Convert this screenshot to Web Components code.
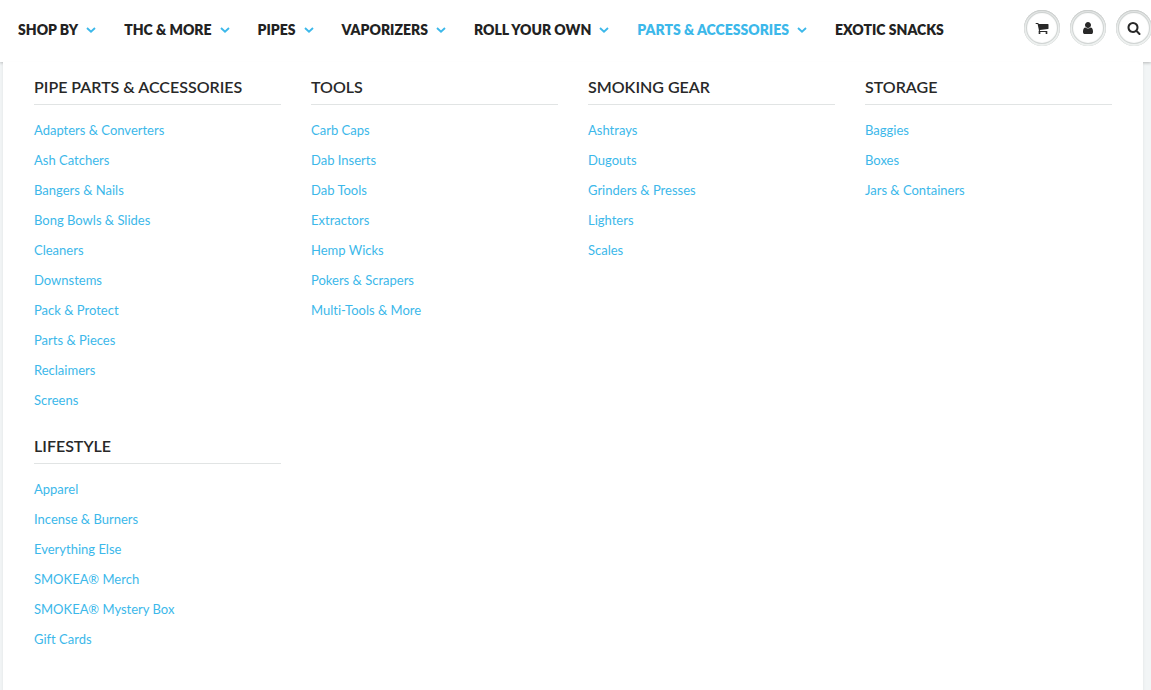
<!DOCTYPE html>
<html lang="en">
<head>
<meta charset="utf-8">
<title>Parts &amp; Accessories</title>
<style>
html { height: 100%; }
body { margin: 0; min-height: 100%; display: flex; flex-direction: column; background: #f2f5f6; font-family: Lato, "Liberation Sans", sans-serif; color: #282828; overflow-x: hidden; }
mega-menu { flex: 1; }
</style>
</head>
<body>
<site-header>
  <nav-item menu>SHOP BY</nav-item>
  <nav-item menu>THC &amp; MORE</nav-item>
  <nav-item menu>PIPES</nav-item>
  <nav-item menu>VAPORIZERS</nav-item>
  <nav-item menu>ROLL YOUR OWN</nav-item>
  <nav-item menu active>PARTS &amp; ACCESSORIES</nav-item>
  <nav-item>EXOTIC SNACKS</nav-item>
  <icon-button slot="actions" icon="cart" label="Cart"></icon-button>
  <icon-button slot="actions" icon="user" label="Account"></icon-button>
  <icon-button slot="actions" icon="search" label="Search"></icon-button>
</site-header>
<mega-menu>
  <menu-group heading="PIPE PARTS &amp; ACCESSORIES" items="Adapters &amp; Converters|Ash Catchers|Bangers &amp; Nails|Bong Bowls &amp; Slides|Cleaners|Downstems|Pack &amp; Protect|Parts &amp; Pieces|Reclaimers|Screens"></menu-group>
  <menu-group heading="TOOLS" items="Carb Caps|Dab Inserts|Dab Tools|Extractors|Hemp Wicks|Pokers &amp; Scrapers|Multi-Tools &amp; More"></menu-group>
  <menu-group heading="SMOKING GEAR" items="Ashtrays|Dugouts|Grinders &amp; Presses|Lighters|Scales"></menu-group>
  <menu-group heading="STORAGE" items="Baggies|Boxes|Jars &amp; Containers"></menu-group>
  <menu-group heading="LIFESTYLE" items="Apparel|Incense &amp; Burners|Everything Else|SMOKEA® Merch|SMOKEA® Mystery Box|Gift Cards"></menu-group>
</mega-menu>
<script>
class BaseElement extends HTMLElement {
  render(html) {
    const t = document.createElement('template');
    t.innerHTML = html;
    this.attachShadow({ mode: 'open' }).append(t.content.cloneNode(true));
  }
}

customElements.define('site-header', class extends BaseElement {
  constructor() {
    super();
    this.render(`<style>
      :host { display: block; background: #fff; box-shadow: 0 1px 3px rgba(0,0,0,.25); }
      header { display: flex; justify-content: space-between; height: 62px; }
      nav { display: flex; gap: 28px; padding: 20px 0 0 18px; }
      .actions { display: flex; gap: 10px; padding-top: 10px; margin-right: -1px; }
    </style>
    <header><nav aria-label="Main"><slot></slot></nav><div class="actions"><slot name="actions"></slot></div></header>`);
  }
});

customElements.define('nav-item', class extends BaseElement {
  connectedCallback() {
    if (this.shadowRoot) return;
    const arrow = this.hasAttribute('menu')
      ? '<svg width="10" height="6" viewBox="0 0 10 6" aria-hidden="true"><path d="M1 1l4 3.7L9 1" fill="none" stroke="#3cb8ea" stroke-width="1.9"/></svg>' : '';
    this.render(`<style>
      :host { display: block; white-space: nowrap; }
      a { display: flex; align-items: center; gap: 8px; color: #222; text-decoration: none; font-size: 14px; line-height: 20px; font-weight: 800; }
      :host([active]) a { color: #3cb8ea; }
      svg { display: block; }
    </style><a href="#"><slot></slot>${arrow}</a>`);
  }
});

const ICONS = {
  cart: 'M704 1536q0 52-38 90t-90 38-90-38-38-90 38-90 90-38 90 38 38 90zm896 0q0 52-38 90t-90 38-90-38-38-90 38-90 90-38 90 38 38 90zm128-1088v512q0 24-16.5 42.5t-40.5 21.5l-1044 122q13 60 13 70 0 16-24 64h920q26 0 45 19t19 45-19 45-45 19h-1024q-26 0-45-19t-19-45q0-11 8-31.5t16-36 21.5-40 15.5-29.5l-177-823h-204q-26 0-45-19t-19-45 19-45 45-19h256q16 0 28.5 6.5t19.5 15.5 13 24.5 8 26 5.5 29.5 4.5 26h1201q26 0 45 19t19 45z',
  user: 'M1536 1399q0 109-62.5 187t-150.5 78h-854q-88 0-150.5-78t-62.5-187q0-85 8.5-160.5t31.5-152 58.5-131 94-89 134.5-34.5q131 128 313 128t313-128q76 0 134.5 34.5t94 89 58.5 131 31.5 152 8.5 160.5zm-256-887q0 159-112.5 271.5t-271.5 112.5-271.5-112.5-112.5-271.5 112.5-271.5 271.5-112.5 271.5 112.5 112.5 271.5z',
  search: 'M1216 832q0-185-131.5-316.5t-316.5-131.5-316.5 131.5-131.5 316.5 131.5 316.5 316.5 131.5 316.5-131.5 131.5-316.5zm512 832q0 52-38 90t-90 38q-54 0-90-38l-343-342q-179 124-399 124-143 0-273.5-55.5t-225-150-150-225-55.5-273.5 55.5-273.5 150-225 225-150 273.5-55.5 273.5 55.5 225 150 150 225 55.5 273.5q0 220-124 399l343 343q37 37 37 90z'
};

customElements.define('icon-button', class extends BaseElement {
  connectedCallback() {
    if (this.shadowRoot) return;
    this.render(`<style>
      :host { display: block; }
      button { display: flex; align-items: center; justify-content: center; box-sizing: border-box; width: 36px; height: 36px; padding: 0; border: 0; border-radius: 50%; background: #fff; color: #282828; box-shadow: inset 0 1px 2px rgba(0,0,0,.2), inset 0 0 0 2px #eef1f0, inset 0 0 1px 3px #ccd0cf; cursor: pointer; }
      svg { display: block; }
    </style><button type="button" aria-label="${this.getAttribute('label')}"><svg width="14" height="14" viewBox="0 0 1792 1792" fill="currentColor" aria-hidden="true"><path d="${ICONS[this.getAttribute('icon')]}"/></svg></button>`);
  }
});

customElements.define('mega-menu', class extends BaseElement {
  constructor() {
    super();
    this.render(`<style>
      :host { display: block; position: relative; margin: 0 8px 0 3px; background: #fff; box-shadow: 0 2px 3px rgba(0,0,0,.08); }
      .grid { display: grid; grid-template-columns: repeat(4, minmax(0, 1fr)); gap: 19px 30px; padding: 13px 31px 36px; }
    </style><div class="grid"><slot></slot></div>`);
  }
});

customElements.define('menu-group', class extends BaseElement {
  connectedCallback() {
    if (this.shadowRoot) return;
    const links = this.getAttribute('items').split('|')
      .map(s => `<li><a href="#">${s.replace('&', '&amp;')}</a></li>`).join('');
    this.render(`<style>
      :host { display: block; }
      h2 { margin: 0 0 10px; padding-bottom: 5px; border-bottom: 1px solid #e1e4e4; font-size: 16px; line-height: 24px; font-weight: 600; color: #282828; }
      ul { margin: 0; padding: 0; list-style: none; }
      li { line-height: 30px; font-size: 13px; font-variant-ligatures: none; }
      a { color: #3cb8ea; text-decoration: none; }
    </style><h2>${this.getAttribute('heading').replace('&', '&amp;')}</h2><ul>${links}</ul>`);
  }
});
</script>
</body>
</html>
